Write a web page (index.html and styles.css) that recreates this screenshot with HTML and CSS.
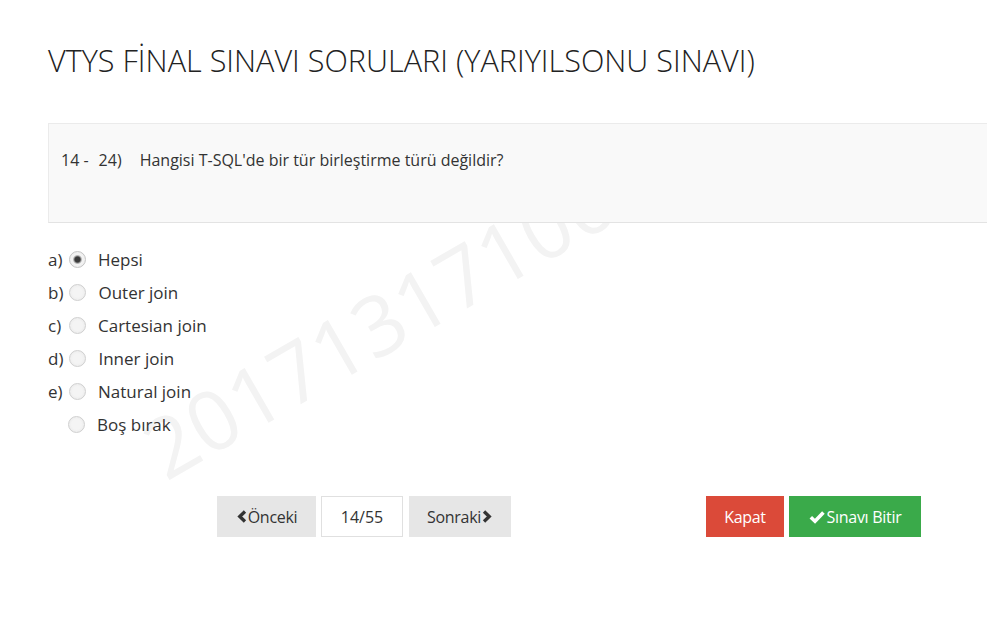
FILE: index.html
```html
<!DOCTYPE html>
<html lang="tr">
<head>
<meta charset="utf-8">
<title>VTYS Final Sınavı</title>
<link rel="stylesheet" href="styles.css">
</head>
<body>
<div class="page">
  <div class="watermark">201713171001</div>
  <h1 class="title">VTYS FİNAL SINAVI SORULARI (YARIYILSONU SINAVI)</h1>
  <div class="question">
    <span class="qno">14 -</span><span class="qsub">24)</span><span class="qtext">Hangisi T-SQL'de bir tür birleştirme türü değildir?</span>
  </div>
  <ul class="options">
    <li class="opt"><span class="letter">a)</span><input class="radio" type="radio" name="c" checked><span class="label">Hepsi</span></li>
    <li class="opt"><span class="letter">b)</span><input class="radio" type="radio" name="c"><span class="label">Outer join</span></li>
    <li class="opt"><span class="letter">c)</span><input class="radio" type="radio" name="c"><span class="label">Cartesian join</span></li>
    <li class="opt"><span class="letter">d)</span><input class="radio" type="radio" name="c"><span class="label">Inner join</span></li>
    <li class="opt"><span class="letter">e)</span><input class="radio" type="radio" name="c"><span class="label">Natural join</span></li>
    <li class="opt opt-empty"><input class="radio" type="radio" name="c"><span class="label">Boş bırak</span></li>
  </ul>
  <div class="nav">
    <div class="pager">
      <button class="btn btn-gray btn-prev"><svg class="chev" viewBox="0 0 10 14" width="10" height="13"><polyline points="8.2,1.6 2.6,7 8.2,12.4" fill="none" stroke="#333" stroke-width="3.6"/></svg>Önceki</button>
      <div class="counter">14/55</div>
      <button class="btn btn-gray btn-next">Sonraki<svg class="chev" viewBox="0 0 10 14" width="10" height="13"><polyline points="1.8,1.6 7.4,7 1.8,12.4" fill="none" stroke="#333" stroke-width="3.6"/></svg></button>
    </div>
    <div class="actions">
      <button class="btn btn-red">Kapat</button>
      <button class="btn btn-green"><svg class="check" viewBox="0 0 16 14" width="16" height="14"><polyline points="1.8,7.2 6,11.2 14.4,2.4" fill="none" stroke="#fff" stroke-width="3.6"/></svg>Sınavı Bitir</button>
    </div>
  </div>
</div>
</body>
</html>
```

FILE: styles.css
```css
html, body {
  margin: 0;
  padding: 0;
  background: #fff;
  overflow: hidden;
}
body {
  font-family: "Open Sans", "Noto Sans", sans-serif;
  color: #333;
  width: 987px;
  height: 632px;
}
.page {
  position: relative;
  display: flow-root;
  box-sizing: border-box;
  padding-left: 48px;
  height: 632px;
  overflow: hidden;
}
.watermark {
  position: absolute;
  left: 166px;
  top: 409px;
  font-size: 83px;
  line-height: 82px;
  color: #f3f3f3;
  white-space: nowrap;
  transform-origin: 0 73px;
  transform: rotate(-30deg);
  z-index: 0;
  letter-spacing: 0.5px;
}
.title {
  position: relative;
  margin: 44px 0 0 0;
  font-size: 30.6px;
  line-height: 33px;
  font-weight: 300;
  color: #222;
  white-space: nowrap;
}
.question {
  position: relative;
  z-index: 1;
  margin-top: 46px;
  width: 960px;
  box-sizing: border-box;
  height: 100px;
  background: #f9f9f9;
  border: 1px solid #ebebeb;
  border-bottom-color: #e3e3e3;
  padding: 25px 12px;
  font-size: 16px;
  line-height: 22px;
  color: #333;
}
.qno { margin-right: 10px; }
.qsub { margin-right: 18px; }
.options {
  position: relative;
  z-index: 1;
  list-style: none;
  margin: 20px 0 0 0;
  padding: 0;
}
.opt {
  display: flex;
  align-items: center;
  height: 33px;
  font-size: 17px;
}
.letter {
  display: inline-block;
  min-width: 15px;
}
.opt-empty {
  padding-left: 20px;
}
.radio {
  appearance: none;
  -webkit-appearance: none;
  width: 17px;
  height: 17px;
  margin: 0 12px 0 6px;
  border-radius: 50%;
  border: 1px solid #d0d0d0;
  box-sizing: border-box;
  background: radial-gradient(circle at 50% 50%, #f4f4f4 0, #f4f4f4 45%, #e6e6e6 100%);
  position: relative;
}
.opt-empty .radio { margin-left: 0; }
.radio:checked {
  border-color: #c4c4c4;
  background: radial-gradient(circle at 50% 50%, #3a3a3a 0, #3a3a3a 2.6px, #9a9a9a 3.6px, #f2f2f2 4.8px, #f2f2f2 60%, #e6e6e6 100%);
}
.label { color: #333; }
.nav {
  position: relative;
  z-index: 1;
  display: flex;
  margin-top: 55px;
  padding-left: 169px;
}
.pager {
  display: flex;
  gap: 5px;
}
.actions {
  display: flex;
  gap: 5px;
  margin-left: 195px;
}
.btn {
  height: 41px;
  border: none;
  font-family: "Open Sans", "Noto Sans", sans-serif;
  font-size: 16px;
  display: flex;
  align-items: center;
  justify-content: center;
  padding: 0;
  letter-spacing: -0.3px;
}
.btn-gray {
  background: #e6e6e6;
  color: #333;
}
.btn-prev { width: 99px; }
.btn-next { width: 102px; margin-left: 1px; }
.chev { margin: 0 1px; }
.counter {
  width: 82px;
  height: 41px;
  box-sizing: border-box;
  border: 1px solid #e0e0e0;
  background: #fff;
  display: flex;
  align-items: center;
  justify-content: center;
  font-size: 16px;
  color: #333;
}
.btn-red {
  width: 78px;
  background: #db4a39;
  color: #fff;
}
.btn-green {
  width: 132px;
  background: #3aaa4a;
  color: #fff;
}
.check { margin-right: 2px; }
```
